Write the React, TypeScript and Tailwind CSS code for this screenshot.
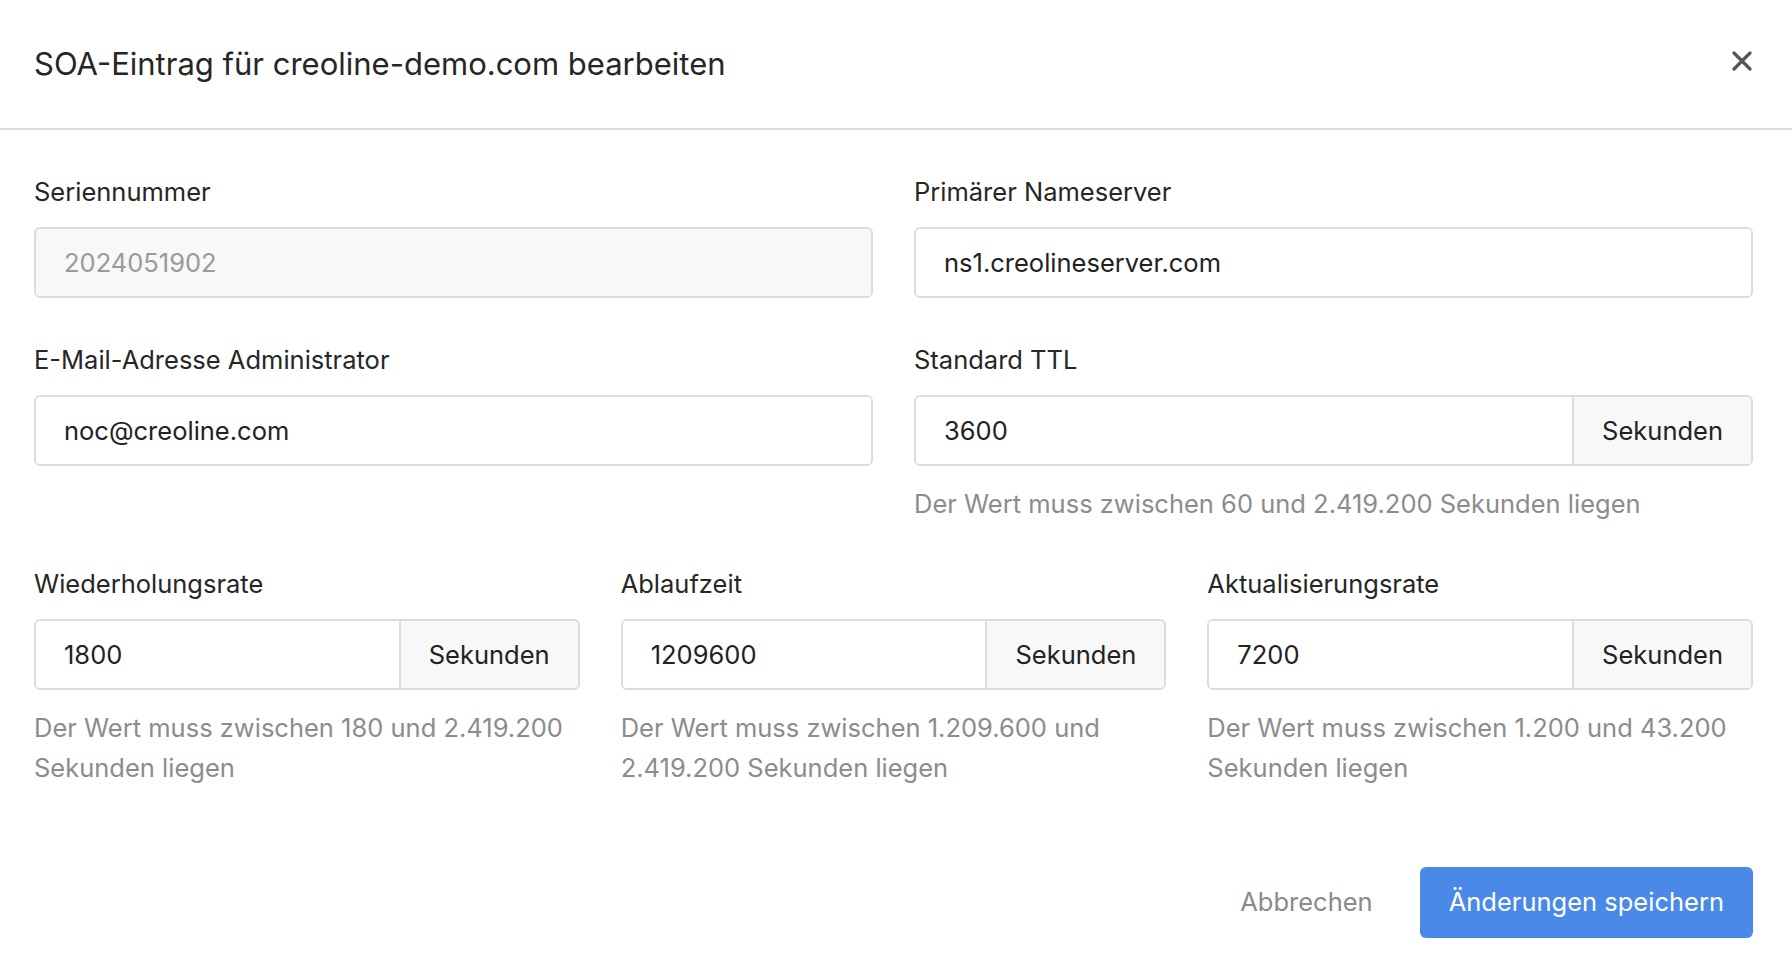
import React from 'react';

function Field({
  label,
  value,
  disabled,
  addon,
  help,
}: {
  label: string;
  value: string;
  disabled?: boolean;
  addon?: string;
  help?: string;
}) {
  return (
    <div className="flex flex-col">
      <label className="text-[25.5px] leading-[40px] text-[#262626] mb-[15px]">{label}</label>
      <div className="flex h-[71px] rounded-[6px] border-2 border-[#dcdcdc] overflow-hidden">
        <div
          className={`flex flex-1 items-center pl-[28px] pt-[2px] text-[25.5px] ${
            disabled ? 'bg-[#f8f8f8] text-[#9a9a9a]' : 'bg-white text-[#222]'
          }`}
        >
          {value}
        </div>
        {addon && (
          <div className="flex items-center px-[28px] pt-[2px] border-l-2 border-[#dcdcdc] bg-[#f8f8f8] text-[25.5px] text-[#222]">
            {addon}
          </div>
        )}
      </div>
      {help && <p className="mt-[18px] text-[25.5px] leading-[40px] text-[#8c8c8c]">{help}</p>}
    </div>
  );
}

export default function App() {
  return (
    <div className="min-h-screen bg-white font-['Inter',sans-serif]">
      {/* Header */}
      <div className="flex h-[130px] items-center justify-between pl-[34px] pr-[40px] border-b-2 border-[#d9d9d9]">
        <h1 className="text-[31px] text-[#262626]">SOA-Eintrag für creoline-demo.com bearbeiten</h1>
        <button className="flex items-center justify-center mb-[7px] text-[#555]">
          <svg width="20" height="20" viewBox="0 0 20 20" fill="none">
            <path d="M2 2L18 18M18 2L2 18" stroke="currentColor" strokeWidth="3.2" strokeLinecap="round" />
          </svg>
        </button>
      </div>

      {/* Body */}
      <div className="pl-[34px] pr-[39px] pt-[42px]">
        <div className="grid grid-cols-2 gap-x-[41px] gap-y-[42px]">
          <Field label="Seriennummer" value="2024051902" disabled />
          <Field label="Primärer Nameserver" value="ns1.creolineserver.com" />
          <Field label="E-Mail-Adresse Administrator" value="noc@creoline.com" />
          <Field
            label="Standard TTL"
            value="3600"
            addon="Sekunden"
            help="Der Wert muss zwischen 60 und 2.419.200 Sekunden liegen"
          />
        </div>

        <div className="grid grid-cols-3 gap-x-[41px] mt-[40px]">
          <Field
            label="Wiederholungsrate"
            value="1800"
            addon="Sekunden"
            help="Der Wert muss zwischen 180 und 2.419.200 Sekunden liegen"
          />
          <Field
            label="Ablaufzeit"
            value="1209600"
            addon="Sekunden"
            help="Der Wert muss zwischen 1.209.600 und 2.419.200 Sekunden liegen"
          />
          <Field
            label="Aktualisierungsrate"
            value="7200"
            addon="Sekunden"
            help="Der Wert muss zwischen 1.200 und 43.200 Sekunden liegen"
          />
        </div>

        {/* Footer */}
        <div className="flex items-center justify-end gap-[19px] mt-[79px]">
          <button className="h-[71px] px-[28px] text-[25.5px] text-[#8a8a8a]">Abbrechen</button>
          <button className="h-[71px] px-[29px] rounded-[6px] bg-[#4a89e8] text-[25.5px] text-white">
            Änderungen speichern
          </button>
        </div>
      </div>
    </div>
  );
}
